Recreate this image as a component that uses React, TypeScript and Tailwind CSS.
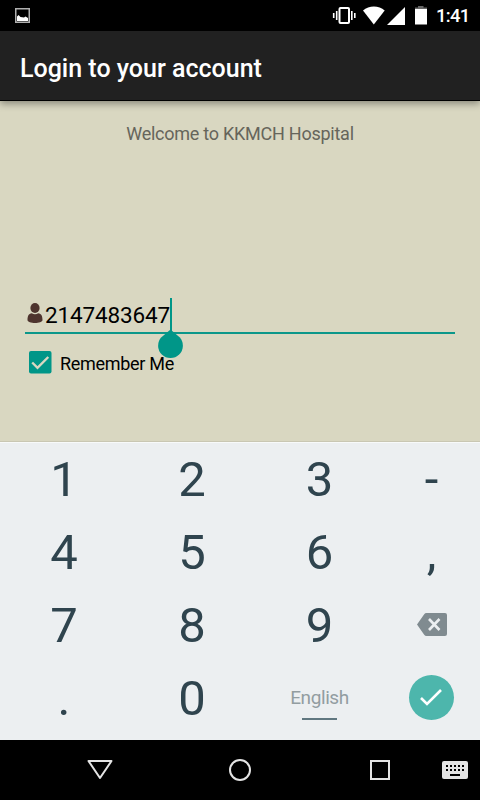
import { useState } from "react";
import type { ReactNode } from "react";

const StatusBar = () => (
  <div className="flex h-[31px] shrink-0 items-center justify-between bg-black text-white">
    <svg className="ml-[15px] h-[15px] w-[15px]" viewBox="0 0 15 15">
      <rect x="0.75" y="0.75" width="13.5" height="13.5" fill="none" stroke="#b0b0b0" strokeWidth="1.5" />
      <path d="M2 13V8.500l1.500-1.500 2 2 3.500.5 1.500-1 2.500 1.500v3z" fill="#fff" />
    </svg>
    <div className="flex items-center">
      <svg className="h-[31px] w-[98px]" viewBox="332 0 98 31">
        <rect x="339.500" y="8" width="9.500" height="15" rx="1" fill="none" stroke="#fff" strokeWidth="2" />
        <path d="M333.700 13v5M336.700 11v9M351.800 11v9M354.800 13v5" stroke="#fff" strokeWidth="1.6" />
        <path d="M373.800 24.500 363 10.500C369 5.200 378.800 5.200 384.700 10.500z" fill="#fff" />
        <path d="M387 25h18V7z" fill="#fff" />
        <path d="M415 9V7.500h3V6h5.500v1.500h3.500V9z" fill="#666" />
        <path d="M415 9h12v15.500h-12z" fill="#fff" />
      </svg>
      <span className="ml-[5px] w-[45px] pt-0.5 pl-px text-[18.5px] leading-none font-medium tracking-[-0.7px]">1:41</span>
    </div>
  </div>
);

const ActionBar = () => (
  <header className="z-10 flex h-[70px] shrink-0 items-center border-b border-black bg-[#212121] px-5 pt-[5px] shadow-[0_3px_7px_rgba(0,0,0,0.35)]">
    <h1 className="text-[25px] leading-none font-medium text-white">Login to your account</h1>
  </header>
);

const PersonIcon = () => (
  <svg className="mb-1 h-5 w-4" viewBox="0 0 16 20" fill="#4e342e">
    <ellipse cx="8" cy="5" rx="4.6" ry="5" />
    <path d="M.5 17c0-4 1-6.200 4.300-6.800 1.700 1.300 4.700 1.300 6.400 0 3.300.6 4.300 2.800 4.300 6.800 0 4-15 4-15 0z" />
  </svg>
);

const LoginForm = () => {
  const [remember, setRemember] = useState(true);

  return (
    <main className="flex h-[341px] shrink-0 flex-col border-b border-[#c9c7b3] bg-[#d9d7c1] px-[25px]">
      <p className="mt-[22px] text-center text-[18px] leading-[22px] tracking-[-0.25px] text-[#66655b]">
        Welcome to KKMCH Hospital
      </p>

      <div className="mt-[153px] flex h-[36px] items-center border-b-2 border-[#0b978a] pl-0.5 text-[22.5px] leading-none text-black">
        <PersonIcon />
        <span className="ml-0.5 tracking-[-0.15px]">2147483647</span>
        <span className="relative h-[34px] w-0.5 bg-[#009688]">
          <svg className="absolute top-[31px] -left-3 h-[30px] w-[25px]" viewBox="0 0 25 30">
            <path d="M12.500 0.500 21.600 8.300A12.400 12.400 0 1 1 3.400 8.300z" fill="#009688" />
          </svg>
        </span>
      </div>

      <button
        className="mt-[17px] flex items-center self-start pl-1 text-[18px] leading-none text-black"
        onClick={() => setRemember(!remember)}
      >
        <svg className="h-[23px] w-[23px]" viewBox="0 0 23 23">
          <rect width="22.500" height="22.500" rx="2" fill="#009688" />
          {remember && <path d="m3.200 11.500 5.300 5.300L19.300 6" fill="none" stroke="#d9d7c1" strokeWidth="2.400" />}
        </svg>
        <span className="ml-2 pt-0.5 tracking-[-0.3px]">Remember Me</span>
      </button>
    </main>
  );
};

const Key = ({ children }: { children: ReactNode }) => (
  <button className="flex h-[73px] items-center justify-center">{children}</button>
);

const Keypad = () => (
  <div className="grid h-[298px] shrink-0 grid-cols-[128px_128px_127px_97px] content-start border-t border-[#f8fafa] bg-[#eceff1] text-[49px] leading-none text-[#2f444e]">
    <Key>1</Key>
    <Key>2</Key>
    <Key>3</Key>
    <Key>-</Key>
    <Key>4</Key>
    <Key>5</Key>
    <Key>6</Key>
    <Key>,</Key>
    <Key>7</Key>
    <Key>8</Key>
    <Key>9</Key>
    <Key>
      <svg className="mb-0.5 h-[23px] w-[30px]" viewBox="0 0 30 23">
        <path d="M0 11.500 7.200 1.200Q8 0 9.500 0H28q2 0 2 2v19q0 2-2 2H9.500q-1.500 0-2.300-1.200z" fill="#808b90" />
        <path d="m12 6 10.500 11M22.500 6 12 17" stroke="#eceff1" strokeWidth="2.600" />
      </svg>
    </Key>
    <Key>.</Key>
    <Key>0</Key>
    <Key>
      <span className="flex flex-col items-center gap-[11px] pt-2.5 text-[19px] tracking-[-0.4px] text-[#929da1]">
        English
        <span className="h-0.5 w-[35px] bg-[#607780]" />
      </span>
    </Key>
    <Key>
      <span className="mb-0.5 flex h-[45px] w-[45px] items-center justify-center rounded-full bg-[#4db6ac]">
        <svg className="mr-0.5 h-[17px] w-[22px]" viewBox="0 0 22 17">
          <path d="m1 9 6 6L21 1" fill="none" stroke="#fff" strokeWidth="2.600" />
        </svg>
      </span>
    </Key>
  </div>
);

const NavBar = () => (
  <nav className="h-[60px] shrink-0 bg-black">
    <svg className="h-full w-full" viewBox="0 0 480 60" fill="none" stroke="#e4e4e4" strokeWidth="2">
      <path d="M88.500 21h23L100 38z" strokeLinejoin="round" />
      <circle cx="240" cy="30" r="10" />
      <rect x="371" y="21" width="18" height="18" />
      <rect x="442" y="21" width="26" height="18" rx="2" fill="#e4e4e4" stroke="none" />
      <path d="M446 26h18M446 30h18" stroke="#000" strokeDasharray="2 2" />
      <path d="M450 35h10" stroke="#000" />
    </svg>
  </nav>
);

export default function App() {
  return (
    <div className="flex h-[800px] w-[480px] flex-col overflow-hidden font-['Roboto',sans-serif]">
      <StatusBar />
      <ActionBar />
      <LoginForm />
      <Keypad />
      <NavBar />
    </div>
  );
}
